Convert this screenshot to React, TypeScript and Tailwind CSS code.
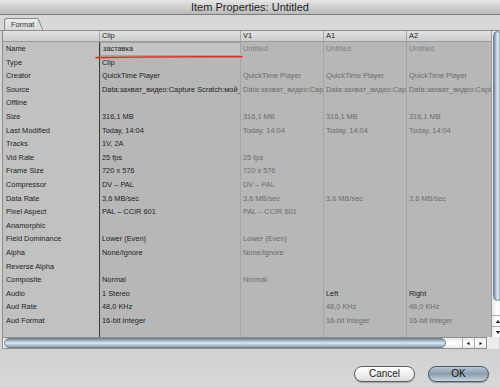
import React from "react";

const cols = [
    {w: "w-[97px]", sep: "border-r-[1.5px] border-[#3c3c3c]"},
    {w: "w-[141px]", sep: "border-r border-[#a4a4a4]"},
    {w: "w-[83px]", sep: "border-r border-[#a4a4a4]"},
    {w: "w-[83px]", sep: "border-r border-[#a4a4a4]"},
    {w: "flex-1", sep: ""},
];

const rows: string[][] = [
    ["Name", "заставка", "Untitled", "Untitled", "Untitled"],
    ["Type", "Clip", "", "", ""],
    ["Creator", "QuickTime Player", "QuickTime Player", "QuickTime Player", "QuickTime Player"],
    ["Source", "Data:захват_видео:Capture Scratch:мой_", "Data:захват_видео:Capt", "Data:захват_видео:Capt", "Data:захват_видео:Capt"],
    ["Offline", "", "", "", ""],
    ["Size", "316,1 MB", "316,1 MB", "316,1 MB", "316,1 MB"],
    ["Last Modified", "Today, 14:04", "Today, 14:04", "Today, 14:04", "Today, 14:04"],
    ["Tracks", "1V, 2A", "", "", ""],
    ["Vid Rate", "25 fps", "25 fps", "", ""],
    ["Frame Size", "720 x 576", "720 x 576", "", ""],
    ["Compressor", "DV – PAL", "DV – PAL", "", ""],
    ["Data Rate", "3,6 MB/sec", "3,6 MB/sec", "3,6 MB/sec", "3,6 MB/sec"],
    ["Pixel Aspect", "PAL – CCIR 601", "PAL – CCIR 601", "", ""],
    ["Anamorphic", "", "", "", ""],
    ["Field Dominance", "Lower (Even)", "Lower (Even)", "", ""],
    ["Alpha", "None/Ignore", "None/Ignore", "", ""],
    ["Reverse Alpha", "", "", "", ""],
    ["Composite", "Normal", "Normal", "", ""],
    ["Audio", "1 Stereo", "", "Left", "Right"],
    ["Aud Rate", "48,0 KHz", "", "48,0 KHz", "48,0 KHz"],
    ["Aud Format", "16-bit Integer", "", "16-bit Integer", "16-bit Integer"],
];

const Arrow: React.FC<{dir: "up" | "down" | "left" | "right"}> = ({dir}) => {
    const pts = {
        up: "1,5 4,1 7,5",
        down: "1,1 4,5 7,1",
        left: "5,1 1,3.5 5,6",
        right: "2,1 6,3.5 2,6",
    }[dir];
    const vert = dir === "up" || dir === "down";
    return (
        <svg viewBox={vert ? "0 0 8 6" : "0 0 7 7"} className={vert ? "w-[6px] h-[5px]" : "w-[5px] h-[5px]"}>
            <polygon points={pts} fill="#222"/>
        </svg>
    );
};

export default function App() {
    return (
        <div className="w-[500px] h-[387px] bg-[#d3d3d3] flex flex-col overflow-hidden font-['Liberation_Sans',Arial,sans-serif]">
            {/* title bar */}
            <div className="h-[15px] shrink-0 flex items-center justify-center bg-gradient-to-b from-[#e6e6e6] to-[#bababa] border-b border-[#7c7c7c]">
                <span className="text-[11px] text-[#1e1e1e] leading-none">Item Properties: Untitled</span>
            </div>

            {/* tabs */}
            <div className="h-[15px] shrink-0 flex items-end pl-[4px] bg-[#d8d8d8]">
                <div className="h-[12px] flex items-end">
                    <div className="h-full flex items-center pl-[6px] pr-[3px] border-l border-t border-[#8a8a8a] rounded-tl-[3px] bg-gradient-to-b from-[#ececec] to-[#d8d8d8]">
                        <span className="text-[7.4px] text-[#333] leading-none">Format</span>
                    </div>
                    <svg viewBox="0 0 6 12" className="w-[6px] h-[12px]">
                        <polygon points="0,0 1,0 6,12 0,12" fill="#dedede"/>
                        <polyline points="0,0.5 1,0.5 5.8,12" fill="none" stroke="#8a8a8a" strokeWidth="1"/>
                    </svg>
                </div>
            </div>

            {/* table + vertical scroller */}
            <div className="h-[307px] shrink-0 flex pl-[2px] pr-[1px] border-t border-[#8e8e8e]">
                <div className="flex-1 flex flex-col border-l border-[#8e8e8e] bg-[#b7b7b7] relative">
                    {/* header */}
                    <div className="h-[11px] shrink-0 flex bg-gradient-to-b from-[#e2e2e2] to-[#cdcdcd] border-b border-[#9a9a9a]">
                        {["", "Clip", "V1", "A1", "A2"].map((h, i) => (
                            <div key={i}
                                 className={`${cols[i].w} shrink-0 h-full flex items-center pl-[2px] text-[7.4px] text-[#222] leading-none ${i < 4 ? "border-r border-[#a8a8a8]" : ""}`}>
                                {h}
                            </div>
                        ))}
                    </div>
                    {/* body */}
                    <div className="flex-1 flex flex-col">
                        {rows.map((r, ri) => (
                            <div key={ri} className="h-[13.6px] shrink-0 flex">
                                {r.map((c, ci) => {
                                    const isLabel = ci === 0;
                                    const editing = ri === 0 && ci === 1;
                                    const dark = ci <= 1 || c === "Left" || c === "Right";
                                    return (
                                        <div key={ci}
                                             className={`${cols[ci].w} shrink-0 h-full flex items-center overflow-hidden whitespace-nowrap text-[7.4px] leading-none ${cols[ci].sep} ${isLabel ? "bg-[#c1c1c1] pl-[3px]" : "pl-[2px]"} ${dark ? "text-[#222]" : c === "Untitled" ? "text-[#7f7f7f]" : "text-[#6c6c6c]"} ${editing ? "border border-[#2a2a2a] bg-[#c4c4c4] pl-[1px]" : ""}`}>
                                            {c}
                                        </div>
                                    );
                                })}
                            </div>
                        ))}
                        <div className="flex-1 flex">
                            {cols.map((c, i) => (
                                <div key={i} className={`${c.w} shrink-0 ${c.sep} ${i === 0 ? "bg-[#c1c1c1]" : ""}`}/>
                            ))}
                        </div>
                    </div>
                    {/* red annotation underline */}
                    <svg className="absolute left-[92px] top-[24px] w-[148px] h-[4px]" viewBox="0 0 148 4">
                        <path d="M1 2.6 Q 70 1.4 147 1.8" stroke="#d8352a" strokeWidth="1.6" fill="none" strokeLinecap="round"/>
                    </svg>
                </div>

                {/* vertical scrollbar */}
                <div className="w-[12px] shrink-0 flex flex-col border-l border-[#9a9a9a] bg-gradient-to-r from-[#e9e9e9] via-[#ffffff] to-[#e9e9e9]">
                    <div className="h-[270px] mx-[1px] rounded-full border border-[#6e7f90] bg-gradient-to-r from-[#7b8ea2] via-[#dfe8f1] to-[#8ea2b6]"/>
                    <div className="flex-1"/>
                    <div className="h-[11px] flex items-center justify-center border-t border-[#b0b0b0]"><Arrow dir="up"/></div>
                    <div className="h-[11px] flex items-center justify-center border-t border-[#b0b0b0]"><Arrow dir="down"/></div>
                </div>
            </div>

            {/* horizontal scrollbar */}
            <div className="h-[12px] shrink-0 flex pl-[2px] pr-[1px]">
                <div className="flex-1 flex items-stretch border border-[#8e8e8e] bg-gradient-to-b from-[#e9e9e9] via-[#ffffff] to-[#e9e9e9]">
                    <div className="w-[442px] ml-[1px] rounded-full border border-[#6e7f90] bg-gradient-to-b from-[#7b8ea2] via-[#dfe8f1] to-[#8ea2b6]"/>
                    <div className="flex-1"/>
                    <div className="w-[12px] flex items-center justify-center border-l border-[#b0b0b0]"><Arrow dir="left"/></div>
                    <div className="w-[12px] flex items-center justify-center border-l border-[#b0b0b0]"><Arrow dir="right"/></div>
                </div>
                <div className="w-[12px] shrink-0 bg-[#ececec]"/>
            </div>

            {/* footer */}
            <div className="flex-1 flex items-start justify-end gap-[13px] pt-[17px] pr-[11px] bg-gradient-to-b from-[#d0d0d0] to-[#d8d8d8]">
                <button className="w-[61px] h-[16px] rounded-full border border-[#5e5e5e] bg-gradient-to-b from-[#ffffff] via-[#f1f1f1] to-[#dadada] text-[10px] text-[#1a1a1a] leading-none shadow-[0_1px_1px_rgba(0,0,0,0.25)]">
                    Cancel
                </button>
                <button className="w-[61px] h-[16px] rounded-full border border-[#4b5866] bg-gradient-to-b from-[#b9c6d3] via-[#8a9db1] to-[#c9d5e1] text-[10px] text-[#111] leading-none shadow-[0_1px_1px_rgba(0,0,0,0.3)]">
                    OK
                </button>
            </div>
        </div>
    );
}
